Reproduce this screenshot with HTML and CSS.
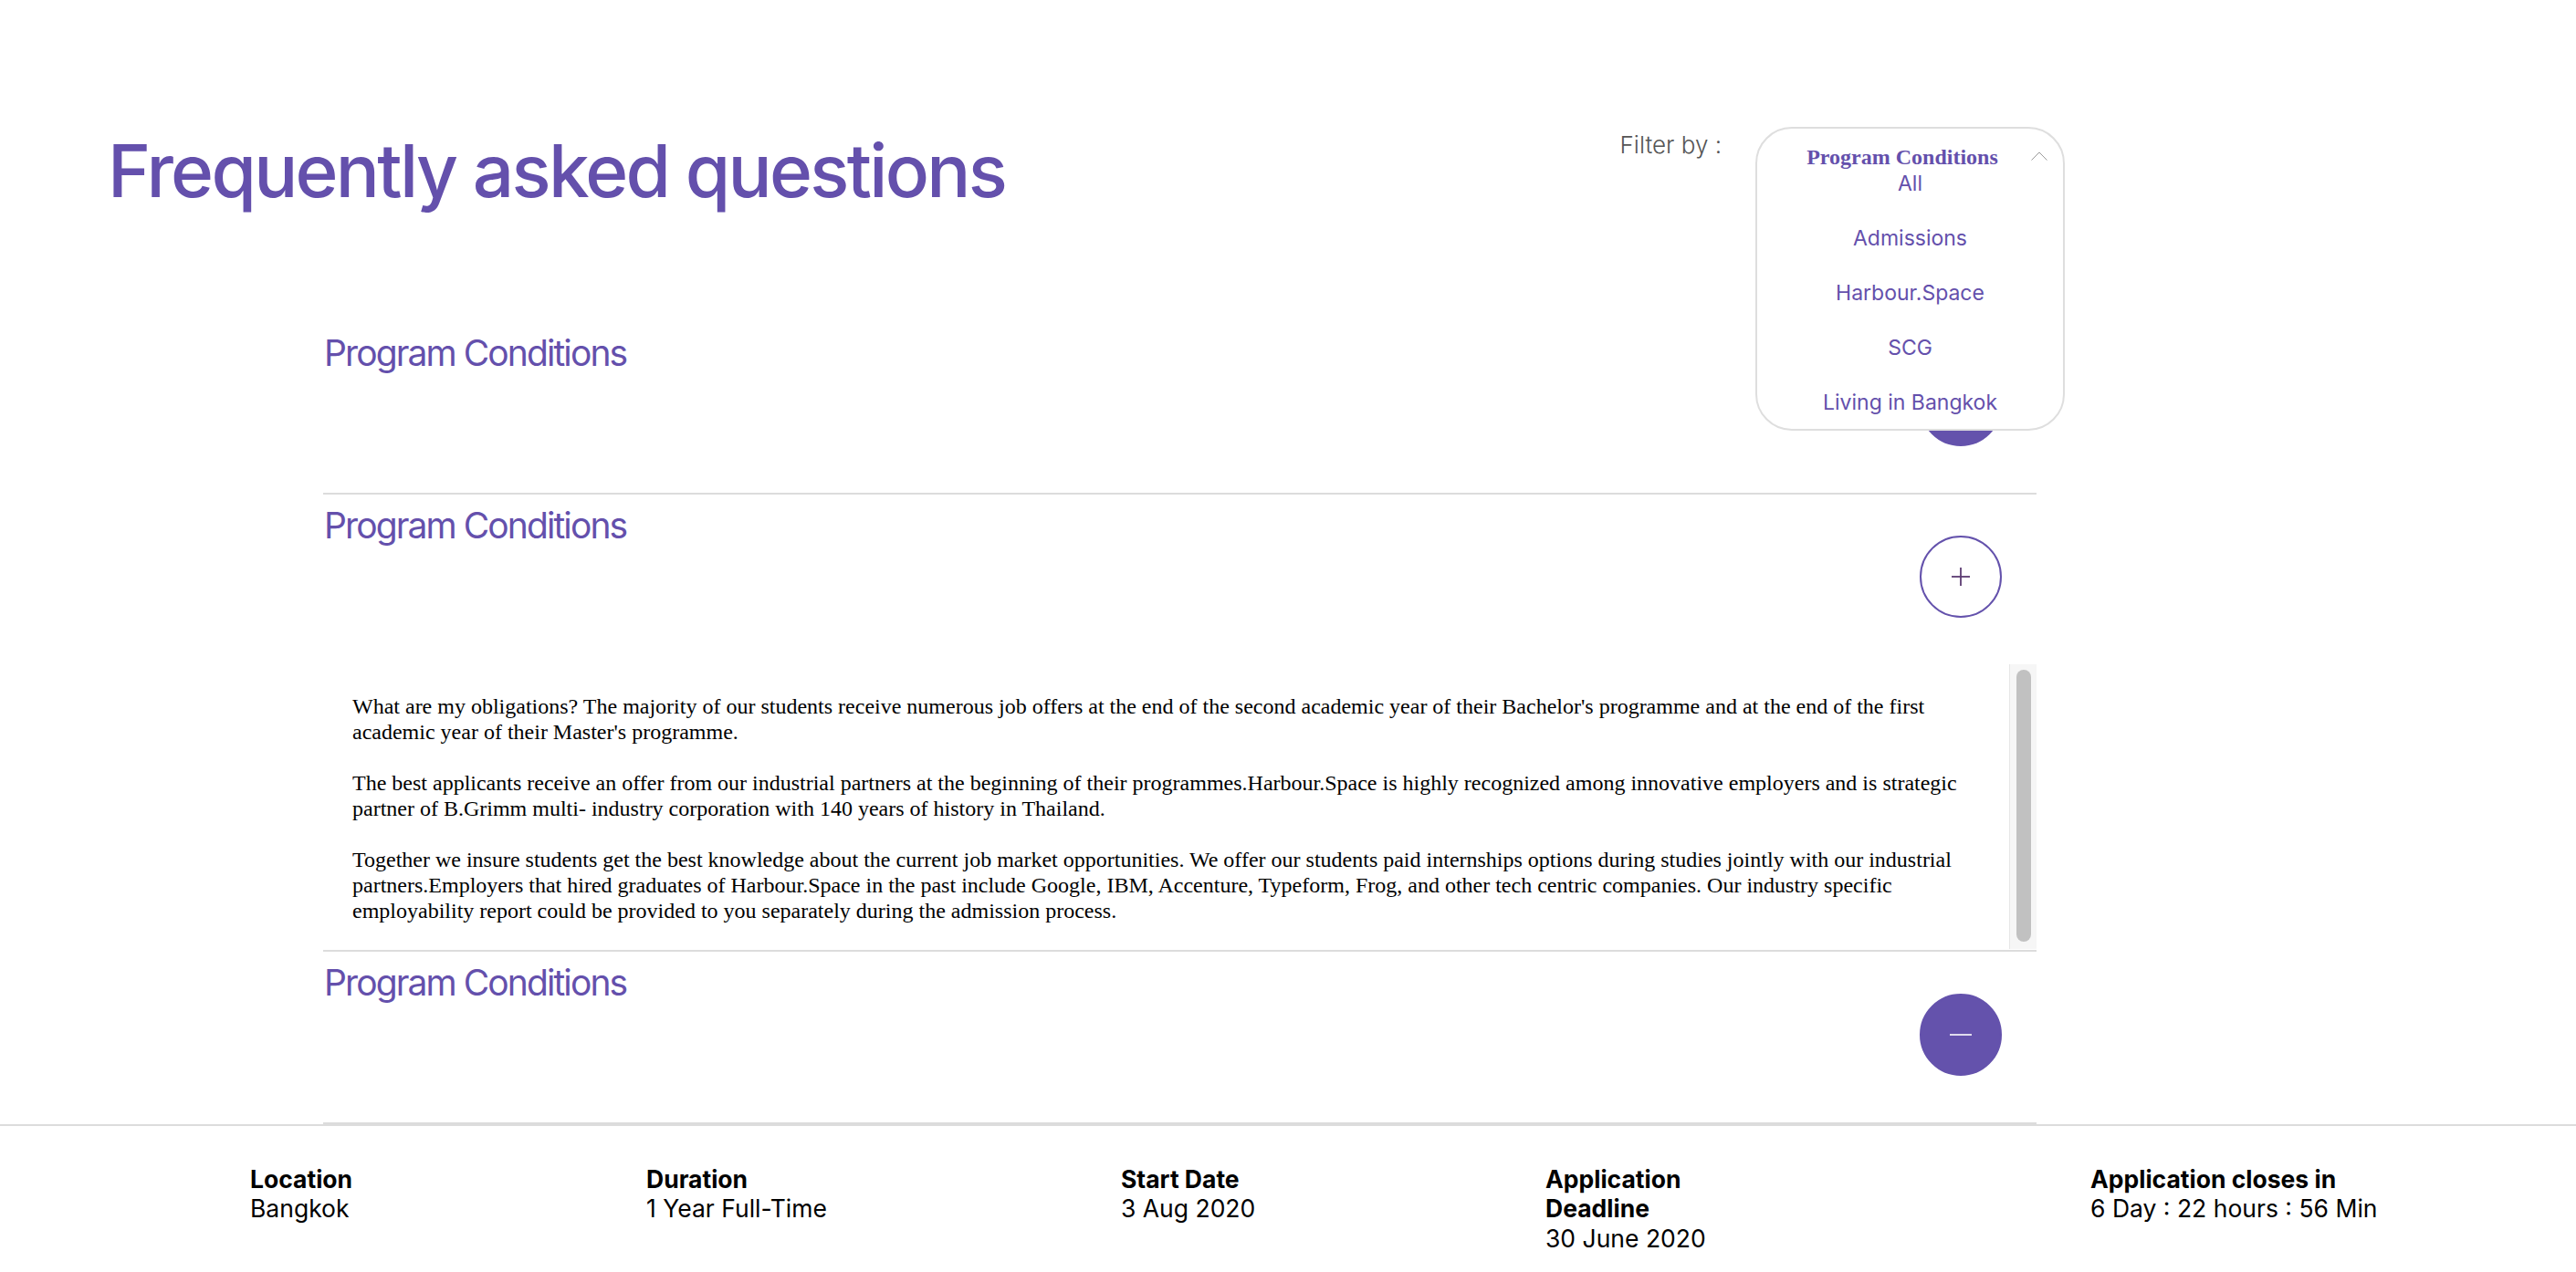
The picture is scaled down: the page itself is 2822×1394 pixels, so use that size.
FILE: index.html
```html
<!DOCTYPE html>
<html lang="en">
<head>
<meta charset="utf-8">
<title>Frequently asked questions</title>
<link rel="stylesheet" href="styles.css">
</head>
<body>
<header class="top">
  <h1 class="title">Frequently asked questions</h1>
  <div class="filter">
    <span class="filter-label">Filter by :</span>
    <div class="select">
      <div class="menu">
        <div class="menu-head">
          <span class="menu-current">Program Conditions</span>
          <svg class="chevron" width="18" height="10" viewBox="0 0 18 10"><polyline points="0.5,9.5 9,1 17.5,9.5" fill="none" stroke="#9a9a9a" stroke-width="1"/></svg>
        </div>
        <ul class="menu-list">
          <li>All</li>
          <li>Admissions</li>
          <li>Harbour.Space</li>
          <li>SCG</li>
          <li>Living in Bangkok</li>
        </ul>
      </div>
    </div>
  </div>
</header>

<main class="faq-list">
  <section class="faq-item">
    <div class="faq-head">
      <h2 class="faq-title">Program Conditions</h2>
      <button class="toggle toggle-filled" aria-label="collapse">
        <svg width="24" height="4" viewBox="0 0 24 4"><line x1="0" y1="2" x2="24" y2="2" stroke="#fff" stroke-width="1.6"/></svg>
      </button>
    </div>
  </section>

  <section class="faq-item faq-open">
    <div class="faq-head">
      <h2 class="faq-title">Program Conditions</h2>
      <button class="toggle toggle-outline" aria-label="expand">
        <svg width="22" height="22" viewBox="0 0 22 22"><line x1="1" y1="11" x2="21" y2="11" stroke="#5c3c72" stroke-width="1.8"/><line x1="11" y1="1" x2="11" y2="21" stroke="#5c3c72" stroke-width="1.8"/></svg>
      </button>
    </div>
    <div class="panel">
      <div class="panel-text">What are my obligations? The majority of our students receive numerous job offers at the end of the second academic year of their Bachelor's programme and at the end of the first academic year of their Master's programme.<br><br>The best applicants receive an offer from our industrial partners at the beginning of their programmes.Harbour.Space is highly recognized among innovative employers and is strategic partner of B.Grimm multi- industry corporation with 140 years of history in Thailand.<br><br>Together we insure students get the best knowledge about the current job market opportunities. We offer our students paid internships options during studies jointly with our industrial partners.Employers that hired graduates of Harbour.Space in the past include Google, IBM, Accenture, Typeform, Frog, and other tech centric companies. Our industry specific employability report could be provided to you separately during the admission process.</div>
      <div class="scrollbar"><div class="thumb"></div></div>
    </div>
  </section>

  <section class="faq-item">
    <div class="faq-head">
      <h2 class="faq-title">Program Conditions</h2>
      <button class="toggle toggle-filled" aria-label="collapse">
        <svg width="24" height="4" viewBox="0 0 24 4"><line x1="0" y1="2" x2="24" y2="2" stroke="#fff" stroke-width="1.6"/></svg>
      </button>
    </div>
  </section>
</main>

<footer class="facts">
  <dl class="fact">
    <dt>Location</dt>
    <dd>Bangkok</dd>
  </dl>
  <dl class="fact">
    <dt>Duration</dt>
    <dd>1 Year Full-Time</dd>
  </dl>
  <dl class="fact">
    <dt>Start Date</dt>
    <dd>3 Aug 2020</dd>
  </dl>
  <dl class="fact fact-narrow">
    <dt>Application Deadline</dt>
    <dd>30 June 2020</dd>
  </dl>
  <dl class="fact">
    <dt>Application closes in</dt>
    <dd>6 Day : 22 hours : 56 Min</dd>
  </dl>
</footer>
</body>
</html>
```

FILE: styles.css
```css
* { box-sizing: border-box; }

html, body {
  margin: 0;
  padding: 0;
  background: #fff;
}

body {
  font-family: Inter, "Noto Sans", "Liberation Sans", sans-serif;
  color: #000;
  overflow: hidden;
}

/* ---------- header ---------- */
.top {
  display: flex;
  align-items: flex-start;
  padding: 139px 560px 0 118px;
}

.title {
  margin: 7.5px 0 0 0;
  font-size: 80px;
  line-height: 80px;
  font-weight: 500;
  color: #6450ac;
  letter-spacing: -2.7px;
}

.filter {
  margin-left: auto;
  display: flex;
  align-items: flex-start;
}

.filter-label {
  margin-top: 3.5px;
  margin-right: 37px;
  font-size: 26px;
  line-height: 32px;
  font-weight: 300;
  color: #555;
}

.select {
  position: relative;
  width: 339px;
  height: 60px;
}

.menu {
  position: absolute;
  top: 0;
  left: 0;
  width: 339px;
  height: 333px;
  background: #fff;
  border: 2px solid #dedede;
  border-radius: 40px;
  padding: 17px 0 0 0;
  z-index: 5;
}

.menu-head {
  position: relative;
  text-align: center;
  padding-right: 17px;
}

.menu-current {
  font-family: "Liberation Serif", "Times New Roman", serif;
  font-weight: 700;
  font-size: 24px;
  line-height: 28px;
  color: #6450ac;
}

.chevron {
  position: absolute;
  right: 17px;
  top: 8px;
}

.menu-list {
  list-style: none;
  margin: 0;
  padding: 0;
  text-align: center;
  font-size: 23px;
  line-height: 30px;
  color: #6450ac;
}

.menu-list li + li {
  margin-top: 30px;
}

/* ---------- faq list ---------- */
.faq-list {
  margin: 126.5px 591px 0 354px;
}

.faq-item {
  padding: 10px 0 51px 0;
  border-bottom: 2px solid #dcdcdc;
}

.faq-item.faq-open {
  padding-bottom: 1.5px;
}

.faq-head {
  display: flex;
  justify-content: space-between;
  align-items: flex-start;
}

.faq-title {
  margin: 0;
  font-size: 39px;
  line-height: 48px;
  font-weight: 400;
  color: #6450ac;
  letter-spacing: -1.9px;
  padding-left: 1px;
}

.toggle {
  margin: 35.5px 38px 0 0;
  width: 90px;
  height: 90px;
  border-radius: 50%;
  padding: 0;
  display: flex;
  align-items: center;
  justify-content: center;
  cursor: pointer;
}

.toggle-filled {
  background: #6452ac;
  border: 2px solid #6452ac;
}

.toggle-outline {
  background: #fff;
  border: 2px solid #6452ac;
}

.panel {
  margin-top: 50.5px;
  height: 312px;
  display: flex;
}

.panel-text {
  flex: 1;
  overflow: hidden;
  padding: 32px 31px 0 32px;
  font-family: "Liberation Serif", "Times New Roman", serif;
  font-size: 24px;
  line-height: 28px;
  color: #000;
}

.scrollbar {
  width: 30px;
  background: #f6f6f6;
  border-left: 1px solid #e6e6e6;
  display: flex;
  padding: 6px 6px 8px 7px;
}

.thumb {
  flex: 1;
  background: #c1c1c1;
  border-radius: 8px;
}

/* ---------- footer ---------- */
.facts {
  border-top: 2px solid #dcdcdc;
  display: grid;
  grid-template-columns: 434px 520px 465px 597px auto;
  padding: 42px 0 40px 274px;
}

.fact {
  margin: 0;
  font-size: 26.5px;
  line-height: 32.5px;
}

.fact dt {
  font-weight: 700;
}

.fact dd {
  margin: 0;
  font-weight: 400;
}

.fact-narrow {
  max-width: 200px;
}
```
